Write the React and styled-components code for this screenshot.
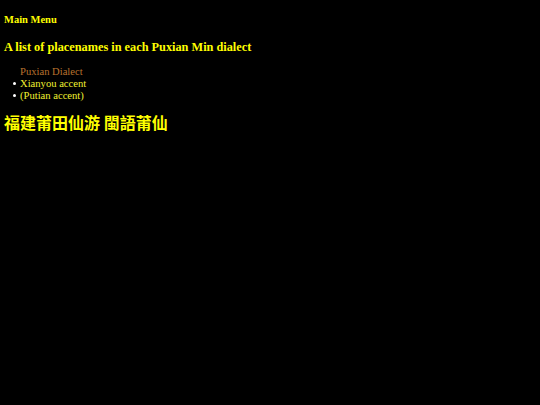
import React from "react";
import styled, { createGlobalStyle } from "styled-components";

const GlobalStyle = createGlobalStyle`
  html, body {
    margin: 0;
    padding: 0;
    background: #000;
  }
  body {
    padding: 4px;
    font-family: "Liberation Serif", "Times New Roman", serif;
    color: #ffff00;
  }
`;

const Page = styled.div`
  display: flex;
  flex-direction: column;
  align-items: flex-start;
`;

const MenuLink = styled.div`
  font-size: 10.5px;
  font-weight: bold;
  margin-top: 9px;
  line-height: 14px;
`;

const Title = styled.h2`
  font-size: 12.3px;
  font-weight: bold;
  margin: 12px 0 0;
  line-height: 16px;
`;

const DialectList = styled.ul`
  margin: 11px 0 0;
  padding-left: 16px;
  font-size: 10.6px;
  line-height: 12px;
  list-style: none;
`;

const ListHead = styled.li`
  color: #b8722e;
`;

const Item = styled.li`
  color: #f0f030;
  &::before {
    content: "";
    display: inline-block;
    width: 3px;
    height: 3px;
    border-radius: 50%;
    background: #ffffff;
    margin-left: -7px;
    margin-right: 4px;
    vertical-align: 2px;
  }
`;

const Chinese = styled.div`
  font-family: "Noto Sans CJK TC", "Noto Sans CJK SC", sans-serif;
  font-size: 16px;
  font-weight: bold;
  margin-top: 9px;
  line-height: 22px;
`;

export default function App() {
  return (
    <>
      <GlobalStyle />
      <Page>
        <MenuLink>Main Menu</MenuLink>
        <Title>A list of placenames in each Puxian Min dialect</Title>
        <DialectList>
          <ListHead>Puxian Dialect</ListHead>
          <Item>Xianyou accent</Item>
          <Item>(Putian accent)</Item>
        </DialectList>
        <Chinese>福建莆田仙游 閩語莆仙</Chinese>
      </Page>
    </>
  );
}
